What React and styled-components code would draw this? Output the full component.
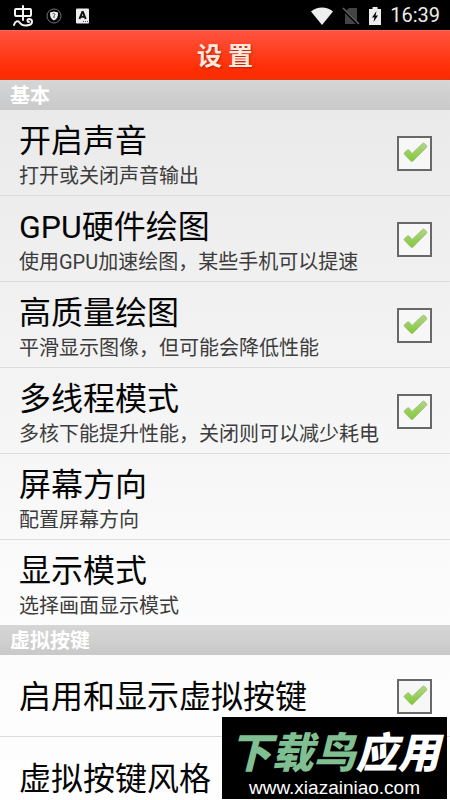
import React, { useState } from "react";
import styled, { createGlobalStyle } from "styled-components";

const GlobalStyle = createGlobalStyle`
  * { box-sizing: border-box; }
  body {
    margin: 0;
    background: #fdfdfd;
    font-family: Roboto, "Noto Sans CJK SC", sans-serif;
    color: #050505;
  }
`;

const Screen = styled.div`
  position: relative;
  display: flex;
  flex-direction: column;
  height: 100vh;
  overflow: hidden;
`;

const StatusBar = styled.div`
  display: flex;
  flex: none;
  align-items: center;
  justify-content: space-between;
  height: 30px;
  padding: 1px 10px 0 12px;
  background: #000;
  color: #ececec;
`;

const StatusGroup = styled.div`
  display: flex;
  align-items: center;
  gap: ${(p) => p.$gap}px;
  svg { display: block; }
`;

const Clock = styled.time`
  font-size: 20px;
  line-height: 29px;
`;

const TitleBar = styled.header`
  display: flex;
  flex: none;
  align-items: center;
  justify-content: center;
  height: 50px;
  padding-top: 3px;
  border-top: 1px solid #f0695c;
  border-bottom: 1px solid #dc3a17;
  background: linear-gradient(#ff5340, #ff2e04 80%, #fa2c02);
`;

const Title = styled.h1`
  margin: 0;
  font-size: 25px;
  line-height: 40px;
  font-weight: 700;
  color: #ffe9de;
  text-shadow: 1px 1px 2px rgba(120, 20, 0, 0.6);
`;

const Content = styled.main`
  flex: 1;
  min-height: 0;
  overflow-y: auto;
  scrollbar-width: none;
  background: linear-gradient(#e9e9e9, #f2f2f2 35%, #fcfcfc 75%, #fefefe);
`;

const SectionTitle = styled.h2`
  height: 30px;
  margin: 0;
  padding: 2px 10px 0;
  background: linear-gradient(#d6d6d6, #c9c9c9);
  font-size: 20px;
  line-height: 28px;
  font-weight: 700;
  color: #fff;
`;

const List = styled.ul`
  margin: 0;
  padding: 0;
  list-style: none;
`;

const Item = styled.li`
  & + & { border-top: 1px solid #dcdcdc; }
`;

const Row = styled.label`
  display: flex;
  align-items: center;
  justify-content: space-between;
  width: 100%;
  height: ${(p) => (p.$compact ? 81 : 85)}px;
  padding: 2px 18px 0 19px;
  border: 0;
  background: none;
  font-family: inherit;
  color: inherit;
  text-align: left;
  cursor: pointer;
`;

const RowText = styled.span`
  display: flex;
  flex-direction: column;
  min-width: 0;
  padding-top: ${(p) => (p.$withNote ? 4 : 0)}px;
  white-space: nowrap;
`;

const RowTitle = styled.span`
  font-size: 32px;
  line-height: 40px;
`;

const RowNote = styled.span`
  font-size: 20px;
  line-height: 30px;
  color: #3c3c3c;
`;

const CheckSlot = styled.span`
  display: grid;
  flex: none;
  width: 35px;
  height: 35px;
  > * { grid-area: 1 / 1; }
`;

const CheckInput = styled.input`
  appearance: none;
  width: 100%;
  height: 100%;
  margin: 0;
  border: 2px solid #686868;
  background: #f7f7f7;
`;

const CheckMark = styled.svg`
  z-index: 1;
  width: 35px;
  height: 35px;
  pointer-events: none;
`;

const Watermark = styled.aside`
  position: absolute;
  right: 3px;
  bottom: 1px;
  display: flex;
  flex-direction: column;
  align-items: center;
  width: 225px;
  height: 82px;
  padding-top: 9px;
  background: #000;
  color: #fff;
  white-space: nowrap;
`;

const Brand = styled.strong`
  font-family: "Noto Sans CJK SC", sans-serif;
  font-size: 42px;
  line-height: 48px;
  font-weight: 900;
  font-style: italic;
`;

const BrandAccent = styled.span`
  color: #7fbf91;
`;

const Site = styled.a`
  font-family: "Liberation Sans", sans-serif;
  font-size: 19px;
  line-height: 28px;
  color: inherit;
  text-decoration: none;
`;

function BugIcon() {
  return (
    <svg width="22" height="22" viewBox="0 0 22 22" fill="none" stroke="#f4f4f4" strokeWidth="2" strokeLinecap="round" strokeLinejoin="round">
      <rect x="3" y="4" width="16" height="7" rx="1" />
      <path d="M11 1v14M2 20c1-4 4-5 6-2 2 3 5 3 9 2 4-1 4-6 0-6-2 0-2 3 0 3" />
    </svg>
  );
}

function ShieldIcon() {
  return (
    <svg width="16" height="16" viewBox="0 0 16 16">
      <circle cx="8" cy="8" r="7" fill="none" stroke="#777" />
      <path d="M4 4.500 8 3.500l4 1c.3 4-1 6.500-4 8-3-1.500-4.300-4-4-8z" fill="#eee" />
      <path d="M6.500 6c1.500-1.200 3 0 2 1.300L8 8v2" fill="none" stroke="#444" />
    </svg>
  );
}

function KeyboardIcon() {
  return (
    <svg width="16" height="16" viewBox="0 0 16 16">
      <rect x="2" y="0.500" width="13" height="15" rx="1" fill="#eee" />
      <path d="M5.500 11 8.300 4h.6l2.800 7M6.500 8.800h4" fill="none" stroke="#111" strokeWidth="2" />
      <path d="M9 13.500h5" stroke="#555" strokeDasharray="1 1" />
    </svg>
  );
}

function WifiIcon() {
  return (
    <svg width="22" height="18" viewBox="0 0 22 18">
      <path d="M0 4.500C6-.8 16-.8 22 4.500L11 18z" fill="#eee" />
    </svg>
  );
}

function NoSimIcon() {
  return (
    <svg width="18" height="18" viewBox="0 0 18 18">
      <path d="M7 1h8v16H3V5z" fill="#444" />
      <path d="M1 2l15 15" stroke="#000" strokeWidth="3" />
      <path d="M1 1l16 16" stroke="#666" strokeWidth="1.500" />
    </svg>
  );
}

function BatteryIcon() {
  return (
    <svg width="12" height="18" viewBox="0 0 12 18">
      <path d="M3.500 0h5v2H12v16H0V2h3.500z" fill="#eee" />
      <path d="M7.500 4 3 10.500h2.500L4.500 15 9 8.500H6.500z" fill="#000" />
    </svg>
  );
}

const basicSettings = [
  { id: "sound", title: "开启声音", note: "打开或关闭声音输出", toggle: true },
  { id: "gpu", title: "GPU硬件绘图", note: "使用GPU加速绘图，某些手机可以提速", toggle: true },
  { id: "quality", title: "高质量绘图", note: "平滑显示图像，但可能会降低性能", toggle: true },
  { id: "threads", title: "多线程模式", note: "多核下能提升性能，关闭则可以减少耗电", toggle: true },
  { id: "rotation", title: "屏幕方向", note: "配置屏幕方向" },
  { id: "display", title: "显示模式", note: "选择画面显示模式" },
];

const keySettings = [
  { id: "keys", title: "启用和显示虚拟按键", toggle: true },
  { id: "style", title: "虚拟按键风格" },
];

function Toggle({ id }) {
  const [checked, setChecked] = useState(true);
  return (
    <CheckSlot>
      <CheckInput id={id} type="checkbox" checked={checked} onChange={(e) => setChecked(e.target.checked)} />
      {checked && (
        <CheckMark viewBox="0 0 35 35" aria-hidden="true">
          <defs>
            <linearGradient id={`${id}-fill`} x1="0" y1="0" x2="0" y2="1">
              <stop offset="0" stopColor="#b3d58a" />
              <stop offset="1" stopColor="#7fc936" />
            </linearGradient>
          </defs>
          <path
            d="M7.500 16.500 10.500 14q1-.6 1.800.3L15 17.500 25.500 7.500q1-.8 2 0L29.500 9.500q.8 1-.2 2L16 25q-1.200 1-2.300 0L7.500 18.500q-.8-1 0-2z"
            fill={`url(#${id}-fill)`}
            stroke="#a5c57f"
            strokeWidth="1"
          />
        </CheckMark>
      )}
    </CheckSlot>
  );
}

function Setting({ id, title, note, toggle }) {
  const rowProps = toggle ? { htmlFor: id } : { as: "button", type: "button" };
  return (
    <Item>
      <Row $compact={!note} {...rowProps}>
        <RowText $withNote={Boolean(note)}>
          <RowTitle>{title}</RowTitle>
          {note && <RowNote>{note}</RowNote>}
        </RowText>
        {toggle && <Toggle id={id} />}
      </Row>
    </Item>
  );
}

export default function App() {
  return (
    <Screen>
      <GlobalStyle />
      <StatusBar>
        <StatusGroup $gap={12}>
          <BugIcon />
          <ShieldIcon />
          <KeyboardIcon />
        </StatusGroup>
        <StatusGroup $gap={9}>
          <WifiIcon />
          <NoSimIcon />
          <BatteryIcon />
          <Clock>16:39</Clock>
        </StatusGroup>
      </StatusBar>
      <TitleBar>
        <Title>设 置</Title>
      </TitleBar>
      <Content>
        <SectionTitle>基本</SectionTitle>
        <List>
          {basicSettings.map((s) => <Setting key={s.id} {...s} />)}
        </List>
        <SectionTitle>虚拟按键</SectionTitle>
        <List>
          {keySettings.map((s) => <Setting key={s.id} {...s} />)}
        </List>
      </Content>
      <Watermark>
        <Brand><BrandAccent>下载鸟</BrandAccent>应用</Brand>
        <Site href="#">www.xiazainiao.com</Site>
      </Watermark>
    </Screen>
  );
}
